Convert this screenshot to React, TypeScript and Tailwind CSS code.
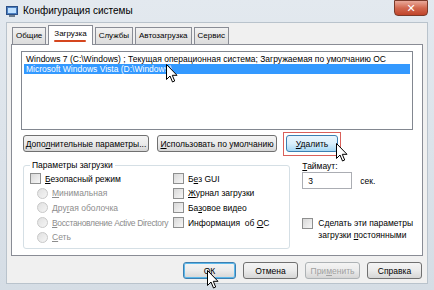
import React from "react";

const font = { fontFamily: '"Liberation Sans", "DejaVu Sans", sans-serif' };

function Btn({ label, className = "", disabled = false }: { label: React.ReactNode; className?: string; disabled?: boolean }) {
  return (
    <div
      className={
        "flex h-[17px] items-center justify-center whitespace-nowrap rounded-[3px] border bg-gradient-to-b from-[#f4f4f4] via-[#ebebeb] to-[#d6d6d6] " +
        (disabled ? "border-[#adb2b5] text-[#a0a0a0] " : "border-[#707070] text-black ") +
        className
      }
    >
      {label}
    </div>
  );
}

function Box() {
  return <div className="h-[11px] w-[11px] shrink-0 border border-[#8e8f8f] bg-gradient-to-br from-[#d8d8d8] to-[#f7f7f7]" />;
}

function Check({ label }: { label: React.ReactNode }) {
  return (
    <div className="flex h-[11px] items-center gap-[4px] whitespace-nowrap">
      <Box />
      <span>{label}</span>
    </div>
  );
}

function Radio({ label }: { label: React.ReactNode }) {
  return (
    <div className="flex h-[11px] items-center gap-[4px] whitespace-nowrap text-[#8d8d8d]">
      <div className="h-[11px] w-[11px] shrink-0 rounded-full border border-[#c8c8c8] bg-gradient-to-br from-[#e0e0e0] to-[#f5f5f5]" />
      <span>{label}</span>
    </div>
  );
}

function Cursor({ className }: { className: string }) {
  return (
    <svg className={"absolute " + className} width="12" height="19" viewBox="0 0 12 19">
      <path d="M0.5 0.5 L0.5 15.5 L4 12 L6.5 18 L8.7 17 L6.3 11.3 L11 11.3 Z" fill="white" stroke="black" strokeWidth="1" />
    </svg>
  );
}

const tab = "flex h-[17px] items-center border border-b-0 border-[#898c95] bg-gradient-to-b from-[#f2f2f2] to-[#dcdcdc] px-[3px] text-[8px]";

export default function App() {
  return (
    <div style={font} className="relative flex h-[290px] w-[434px] flex-col overflow-hidden bg-gradient-to-b from-[#e3e9ef] to-[#d5dde5] text-[8.5px] leading-[10px] text-black">
      {/* title bar */}
      <div className="flex h-[22px] items-center pl-[6px]">
        <svg width="12" height="11" viewBox="0 0 12 11" className="mr-[5px]">
          <rect x="0.5" y="0.5" width="11" height="8" fill="#4a7fc1" stroke="#2b4f86" />
          <rect x="2" y="2" width="8" height="5" fill="#bfe0ff" />
          <rect x="3" y="9" width="6" height="2" fill="#6b7c8e" />
        </svg>
        <span className="text-[10px]">Конфигурация системы</span>
        <div className="ml-auto mr-[6px] flex h-[16px] w-[34px] -translate-y-[3px] items-center justify-center rounded-b-[4px] border border-[#7a3a2a] bg-gradient-to-b from-[#e9a99a] via-[#d2684f] to-[#c0442a]">
          <span className="text-[11px] font-bold leading-none text-white">✕</span>
        </div>
      </div>

      {/* window body */}
      <div className="mx-[6px] flex h-[262px] flex-col border border-[#b9c3cc] bg-[#f0f0f0] px-[4px] pt-[2px]">
        {/* tabs */}
        <div className="flex h-[19px] items-end gap-[2px] pl-[1px]">
          <div className={tab}>Общие</div>
          <div className="relative z-10 -mb-[1px] flex h-[20px] flex-col items-center justify-center border border-b-0 border-[#898c95] bg-white px-[5px] text-[8px]">
            <span>Загрузка</span>
            <div className="mt-[1px] h-[2px] w-[32px] rounded bg-[#d5461e]" />
          </div>
          <div className={tab}>Службы</div>
          <div className={tab}>Автозагрузка</div>
          <div className={tab}>Сервис</div>
        </div>

        {/* tab panel */}
        <div className="flex h-[212px] flex-col border border-[#898c95] bg-white px-[9px] pt-[6px]">
          {/* list */}
          <div className="h-[79px] border border-[#828790] p-[2px]">
            <div className="whitespace-nowrap pl-[2px]">Windows 7 (C:\Windows) ; Текущая операционная система; Загружаемая по умолчанию ОС</div>
            <div className="whitespace-nowrap bg-[#3399ff] pl-[2px] text-white">Microsoft Windows Vista (D:\Windows)</div>
          </div>

          {/* buttons row */}
          <div className="mt-[5px] flex h-[17px] items-center">
            <Btn className="ml-[2px] w-[126px]" label={<span>Допо<u>л</u>нительные параметры...</span>} />
            <Btn className="ml-[8px] w-[120px]" label={<span><u>И</u>спользовать по умолчанию</span>} />
            <div className="ml-[6px] flex h-[24px] w-[58px] items-center justify-center border border-[#d9605a]">
              <div className="flex h-[17px] w-[52px] items-center justify-center rounded-[3px] border border-[#3c7fb1] bg-gradient-to-b from-[#eaf6fd] via-[#d9f0fc] to-[#a7d9f5]">
                <span><u>У</u>далить</span>
              </div>
            </div>
          </div>

          {/* lower area */}
          <div className="mt-[3px] flex">
            <div className="relative mt-[10px] ml-[2px] h-[84px] w-[278px] rounded-[3px] border border-[#d5dfe5]">
              <span className="absolute -top-[6px] left-[6px] bg-white px-[2px]">Параметры загрузки</span>
              <div className="flex pt-[7px] pl-[6px]">
                <div className="flex w-[143px] flex-col gap-[3.7px]">
                  <Check label={<span><u>Б</u>езопасный режим</span>} />
                  <div className="flex flex-col gap-[3.7px] pl-[7px]">
                    <Radio label={<span><u>М</u>инимальная</span>} />
                    <Radio label={<span>Дру<u>г</u>ая оболочка</span>} />
                    <Radio label={<span className="tracking-[-0.35px]"><u>В</u>осстановление Active Directory</span>} />
                    <Radio label={<span><u>С</u>еть</span>} />
                  </div>
                </div>
                <div className="flex flex-col gap-[3.7px]">
                  <Check label={<span>Б<u>е</u>з GUI</span>} />
                  <Check label={<span><u>Ж</u>урнал загрузки</span>} />
                  <Check label={<span>Ба<u>з</u>овое видео</span>} />
                  <Check label={<span>Информация &nbsp;об <u>О</u>С</span>} />
                </div>
              </div>
            </div>

            <div className="ml-[12px] flex flex-col">
              <span className="mt-[6px]"><u>Т</u>аймаут:</span>
              <div className="mt-[1px] flex items-center">
                <div className="flex h-[17px] w-[50px] items-center border border-[#abadb3] pl-[5px]">3</div>
                <span className="ml-[8px]">сек.</span>
              </div>
              <div className="mt-[28px] flex items-start gap-[5px] whitespace-nowrap leading-[12px]">
                <div className="mt-[1px]"><Box /></div>
                <span>Сделать эти параметры<br />загрузки <u>п</u>остоянными</span>
              </div>
            </div>
          </div>
        </div>

        {/* bottom buttons */}
        <div className="mt-[6px] flex justify-end gap-[7px] pr-[1px]">
          <div className="flex h-[17px] w-[53px] items-center justify-center rounded-[3px] border border-[#3c7fb1] bg-gradient-to-b from-[#f4f4f4] via-[#ebebeb] to-[#d6d6d6] shadow-[inset_0_0_0_1px_#5cb8ea]">ОК</div>
          <Btn className="w-[55px]" label="Отмена" />
          <Btn className="w-[55px]" disabled label={<span>При<u>м</u>енить</span>} />
          <Btn className="w-[55px]" label="Справка" />
        </div>
      </div>

      <Cursor className="left-[166px] top-[64px]" />
      <Cursor className="left-[336px] top-[143px]" />
      <Cursor className="left-[207px] top-[270px]" />
    </div>
  );
}
